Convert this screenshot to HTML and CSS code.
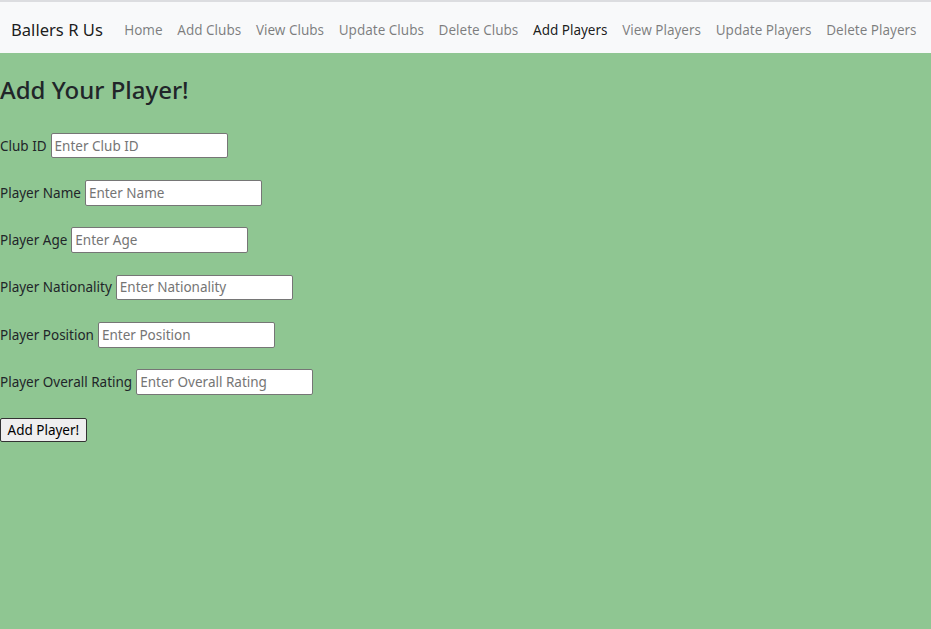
FILE: index.html
```html
<!DOCTYPE html>
<html lang="en">
<head>
<meta charset="utf-8">
<title>Ballers R Us</title>
<link rel="stylesheet" href="styles.css">
</head>
<body>
<nav class="navbar">
  <a class="brand" href="#">Ballers R Us</a>
  <ul class="nav-links">
    <li><a href="#">Home</a></li>
    <li><a href="#">Add Clubs</a></li>
    <li><a href="#">View Clubs</a></li>
    <li><a href="#">Update Clubs</a></li>
    <li><a href="#">Delete Clubs</a></li>
    <li><a class="active" href="#">Add Players</a></li>
    <li><a href="#">View Players</a></li>
    <li><a href="#">Update Players</a></li>
    <li><a href="#">Delete Players</a></li>
  </ul>
</nav>
<main class="content">
  <h3 class="title">Add Your Player!</h3>
  <form class="player-form">
    <div class="row"><label for="club">Club ID</label><input id="club" type="text" placeholder="Enter Club ID"></div>
    <div class="row"><label for="name">Player Name</label><input id="name" type="text" placeholder="Enter Name"></div>
    <div class="row"><label for="age">Player Age</label><input id="age" type="text" placeholder="Enter Age"></div>
    <div class="row"><label for="nat">Player Nationality</label><input id="nat" type="text" placeholder="Enter Nationality"></div>
    <div class="row"><label for="pos">Player Position</label><input id="pos" type="text" placeholder="Enter Position"></div>
    <div class="row"><label for="ovr">Player Overall Rating</label><input id="ovr" type="text" placeholder="Enter Overall Rating"></div>
    <div class="row btn-row"><button type="button" class="submit">Add Player!</button></div>
  </form>
</main>
</body>
</html>
```
FILE: styles.css
```css
html, body {
  margin: 0;
  padding: 0;
  height: 100%;
}
body {
  font-family: "Noto Sans", "Open Sans", sans-serif;
  font-size: 13.5px;
  color: #212529;
  background: #8fc692;
  display: flex;
  flex-direction: column;
}
.navbar {
  display: flex;
  align-items: center;
  height: 47px;
  padding: 4px 0 0 11px;
  background: #f8f9fa;
  border-top: 2px solid #dcdde0;
  box-sizing: content-box;
  white-space: nowrap;
}
.brand {
  font-size: 16.6px;
  color: rgba(0,0,0,.9);
  text-decoration: none;
  margin-right: 14px;
}
.nav-links {
  list-style: none;
  display: flex;
  margin: 0;
  padding: 0;
}
.nav-links a {
  display: block;
  padding: 7px 7.35px;
  color: rgba(0,0,0,.5);
  text-decoration: none;
}
.nav-links a.active {
  color: rgba(0,0,0,.9);
}
.content {
  flex: 1;
}
.title {
  font-size: 24px;
  font-weight: 500;
  line-height: 1.2;
  margin: 23px 0 0;
}
.player-form {
  display: flex;
  flex-direction: column;
  gap: 21.7px;
  margin-top: 28px;
}
.row {
  display: flex;
  align-items: center;
  gap: 4px;
  white-space: nowrap;
}
.btn-row {
  margin-top: 2px;
}
.row input {
  width: 177px;
  height: 25.6px;
  box-sizing: border-box;
  border: 1px solid #767676;
  border-radius: 2px;
  padding: 1px 3px;
  font: inherit;
  background: #fff;
}
.row input::placeholder {
  color: #757575;
}
.submit {
  font: inherit;
  height: 24px;
  padding: 0 6.5px;
  border: 1px solid #333;
  border-radius: 2px;
  background: #efefef;
  color: #000;
}
```
